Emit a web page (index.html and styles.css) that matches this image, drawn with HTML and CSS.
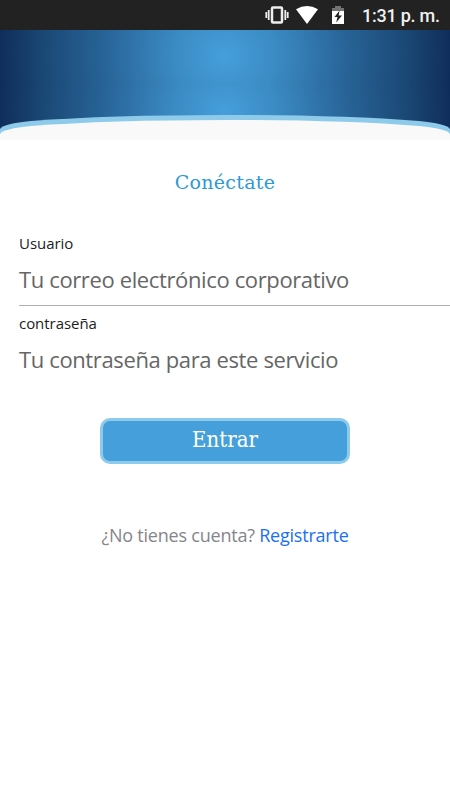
FILE: index.html
```html
<!DOCTYPE html>
<html lang="es">
<head>
<meta charset="utf-8">
<title>Conéctate</title>
<link rel="stylesheet" href="styles.css">
</head>
<body>
<div class="status">
  <svg class="status-icons" width="84" height="30" viewBox="0 0 84 30">
    <g fill="none" stroke="#eee" stroke-width="2">
      <rect x="9" y="7.500" width="10" height="15" rx="1" stroke-width="2.500"/>
      <path d="M5.700 10v10M3.300 12v6M22.300 10v10M24.700 12v6" stroke-width="1.800"/>
    </g>
    <path d="M33 9.200Q44 2.800 55 9.200L44 24Z" fill="#fff"/>
    <path d="M69 8h3V6h6v2h3v3H69z" fill="#737373"/>
    <path d="M69 11h12v13H69z" fill="#fff"/>
    <path d="M76.500 10.500L71.500 17h3l-1.300 5.500L79 15.500h-3.300z" fill="#222"/>
  </svg>
  <time class="clock">1:31 p. m.</time>
</div>
<header class="banner">
  <svg class="curve" width="450" height="25" viewBox="0 0 450 25">
    <path d="M0 25V14C3 10 13 8 31 6Q110 0 225 0T419 6C437 8 447 10 450 14V25Z" fill="#8ecbea"/>
    <path d="M0 25V19C3 15 13 12.700 31 11Q110 5 225 5T419 11C437 12.700 447 15 450 19V25Z" fill="#f9f9f9"/>
  </svg>
</header>
<main class="login">
  <h1 class="title">Conéctate</h1>
  <form class="form">
    <label class="field">
      <span class="label">Usuario</span>
      <span class="placeholder user">Tu correo electrónico corporativo</span>
    </label>
    <label class="field last">
      <span class="label">contraseña</span>
      <span class="placeholder pass">Tu contraseña para este servicio</span>
    </label>
  </form>
  <button class="submit" type="button">Entrar</button>
  <p class="register"><span>¿No tienes cuenta?</span> <a class="link">Registrarte</a></p>
</main>
</body>
</html>
```
FILE: styles.css
```css
* { box-sizing: border-box; }
body {
  margin: 0;
  width: 450px;
  height: 800px;
  overflow: hidden;
  background: #fff;
  font-family: "Open Sans", sans-serif;
}
.status {
  height: 30px;
  background: #222;
  display: flex;
  align-items: center;
  padding-left: 263px;
}
.status-icons { flex: none; }
.clock {
  margin-left: 15px;
  padding-top: 2px;
  white-space: nowrap;
  font: 500 18px/28px Roboto, sans-serif;
  letter-spacing: -0.25px;
  color: #f0f0f0;
}
.banner {
  height: 110px;
  display: flex;
  align-items: flex-end;
  background: radial-gradient(circle 228px at 50% 50%, #459fda 0%, #3b8bc4 22%, #286498 53%, #1b4976 79%, #0f2c59 100%) 0 -2px / 450px 56px repeat-y;
}
.curve { display: block; }
.login {
  display: flex;
  flex-direction: column;
}
.title {
  margin: 28px 0 0;
  text-align: center;
  font: 400 19px/28px "DejaVu Serif", serif;
  letter-spacing: 0.3px;
  color: #2d99d5;
}
.form { padding: 36px 0 0 19px; }
.field {
  display: flex;
  flex-direction: column;
  height: 74px;
  border-bottom: 1px solid #afafb5;
}
.field.last { border: 0; margin-top: 6px; }
.label {
  font-size: 15px;
  line-height: 22px;
  letter-spacing: -0.05px;
  color: #1c1c1c;
}
.placeholder {
  margin-top: 9px;
  font-size: 22px;
  line-height: 32px;
  letter-spacing: -0.37px;
  color: #666;
  white-space: nowrap;
}
.submit {
  width: 250px;
  height: 46px;
  margin: 32px auto 0;
  padding: 0 0 3px;
  border: 3px solid #8ecbea;
  border-radius: 10px;
  background: #459fda;
  color: #fff;
  font: 400 22px/30px "DejaVu Serif Condensed", "DejaVu Serif", serif;
  font-stretch: condensed;
}
.register {
  margin: 57px 0 0;
  text-align: center;
  font-size: 18px;
  line-height: 28px;
  letter-spacing: -0.22px;
  color: #85858a;
}
.link { color: #1a6ff5; }
```
